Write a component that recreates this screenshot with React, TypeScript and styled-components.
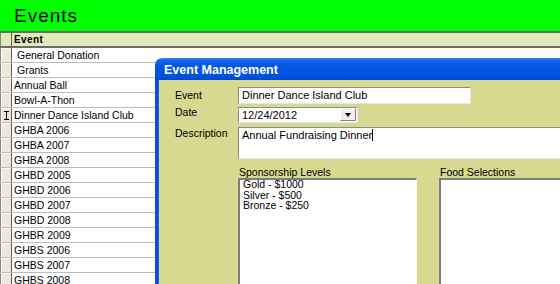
import React from 'react';
import styled, { createGlobalStyle } from 'styled-components';

const GlobalStyle = createGlobalStyle`
  html, body {
    margin: 0;
    padding: 0;
    background: #fff;
  }
  body {
    font-family: "Liberation Sans", Arial, sans-serif;
    color: #000;
  }
`;

const Screen = styled.div`
  position: relative;
  width: 560px;
  height: 284px;
  overflow: hidden;
  background: #fff;
`;

const Banner = styled.div`
  height: 31px;
  background: #00ff00;
  border-bottom: 2px solid #6b6b6b;
  padding-left: 14px;
  font-size: 19px;
  letter-spacing: 1px;
  line-height: 31px;
`;

const Grid = styled.div`
  display: flex;
  flex-direction: column;
`;

const Row = styled.div<{ $head?: boolean }>`
  display: grid;
  grid-template-columns: 12px 1fr;
  height: ${(p) => (p.$head ? 13 : 14)}px;
  flex-shrink: 0;
  border-bottom: ${(p) => (p.$head ? '2px solid #6b6b6b' : '1px solid #bcbcbc')};
  background: ${(p) => (p.$head ? '#e2eabc' : '#fff')};
`;

const Selector = styled.div<{ $head?: boolean }>`
  border-left: 1px solid #8a8a8a;
  border-right: 1px solid #5f5f5f;
  background: ${(p) => (p.$head ? 'transparent' : '#ece9d8')};
  box-shadow: ${(p) => (p.$head ? 'none' : 'inset 1px 1px 0 #fbfaf4')};
  display: flex;
  align-items: center;
  justify-content: center;
`;

const Cell = styled.div<{ $indent?: boolean }>`
  padding-left: ${(p) => (p.$indent ? 5 : 2)}px;
  font-size: 10.5px;
  line-height: 14px;
  white-space: nowrap;
`;

const HeadCell = styled.div`
  padding-left: 2px;
  font-size: 10px;
  font-weight: bold;
  letter-spacing: 0.4px;
  line-height: 13px;
`;

const Window = styled.div`
  position: absolute;
  left: 155px;
  top: 58px;
  width: 450px;
  height: 260px;
  display: flex;
  flex-direction: column;
`;

const WinTitle = styled.div`
  height: 22px;
  border-radius: 7px 7px 0 0;
  background: linear-gradient(
    to bottom,
    #3d8ef5 0%,
    #1266ee 10%,
    #0556e4 35%,
    #0053e2 80%,
    #0047cc 100%
  );
  color: #fff;
  font-size: 12.5px;
  font-weight: bold;
  padding-left: 9px;
  line-height: 25px;
  white-space: nowrap;
`;

const WinBody = styled.div`
  flex: 1;
  background: #d6d98f;
  border-left: 3px solid #0a4bdc;
  box-shadow: inset 1px 0 0 #1c5ee8;
  padding: 7px 0 0 17px;
`;

const Form = styled.div`
  display: grid;
  grid-template-columns: 63px 1fr;
  align-items: start;
`;

const Label = styled.div<{ $offset: number }>`
  font-size: 10.5px;
  line-height: 12px;
  margin-top: ${(p) => p.$offset}px;
  white-space: nowrap;
`;

const Field = styled.div<{ $w: number; $h: number; $gap: number }>`
  box-sizing: border-box;
  width: ${(p) => p.$w}px;
  height: ${(p) => p.$h}px;
  margin-top: ${(p) => p.$gap}px;
  background: #fff;
  border: 1px solid;
  border-color: #8c8c8c #e6e6e6 #e6e6e6 #8c8c8c;
  font-size: 11px;
  line-height: 14px;
  padding: 0 2px 0 3px;
  white-space: nowrap;
  overflow: hidden;
  display: flex;
  align-items: flex-start;
`;

const FieldText = styled.span`
  flex: 1;
`;

const DropButton = styled.div`
  width: 16px;
  height: 13px;
  margin: 0 -1px 0 0;
  box-sizing: border-box;
  background: #f1efe6;
  border: 1px solid;
  border-color: #fff #7f7f7f #7f7f7f #fff;
  display: flex;
  align-items: center;
  justify-content: center;
  &::after {
    content: '';
    border-left: 3.5px solid transparent;
    border-right: 3.5px solid transparent;
    border-top: 4px solid #000;
  }
`;

const Caret = styled.span`
  display: inline-block;
  width: 1px;
  height: 12px;
  background: #000;
  vertical-align: -2px;
`;

const Lists = styled.div`
  grid-column: 2;
  display: flex;
  gap: 22px;
  margin-top: 8px;
`;

const ListGroup = styled.div<{ $w: number }>`
  width: ${(p) => p.$w}px;
  display: flex;
  flex-direction: column;
`;

const Caption = styled.div`
  font-size: 10.5px;
  line-height: 11px;
  height: 11px;
  padding-left: 1px;
  white-space: nowrap;
`;

const ListBox = styled.div`
  height: 140px;
  background: #fff;
  border-top: 2px solid #7d7d7d;
  border-left: 2px solid #7d7d7d;
  border-right: 1px solid #f4f4f4;
  padding: 0 0 0 3px;
`;

const ListItems = styled.div`
  margin-top: -1px;
`;

const ListItem = styled.div`
  font-size: 10.5px;
  line-height: 10.5px;
  white-space: nowrap;
`;

const IBeam = () => (
  <svg width="7" height="9" viewBox="0 0 7 9">
    <path d="M1 0.5h5M3.5 0.5v8M1 8.5h5" stroke="#000" strokeWidth="1" fill="none" />
  </svg>
);

const events = [
  { name: 'General Donation', indent: true },
  { name: 'Grants', indent: true },
  { name: 'Annual Ball' },
  { name: 'Bowl-A-Thon' },
  { name: 'Dinner Dance Island Club', editing: true },
  { name: 'GHBA 2006' },
  { name: 'GHBA 2007' },
  { name: 'GHBA 2008' },
  { name: 'GHBD 2005' },
  { name: 'GHBD 2006' },
  { name: 'GHBD 2007' },
  { name: 'GHBD 2008' },
  { name: 'GHBR 2009' },
  { name: 'GHBS 2006' },
  { name: 'GHBS 2007' },
  { name: 'GHBS 2008' },
];

const levels = ['Gold - $1000', 'Silver - $500', 'Bronze - $250'];

export default function App() {
  return (
    <>
      <GlobalStyle />
      <Screen>
        <Banner>Events</Banner>
        <Grid>
          <Row $head>
            <Selector $head />
            <HeadCell>Event</HeadCell>
          </Row>
          {events.map((e) => (
            <Row key={e.name}>
              <Selector>{e.editing && <IBeam />}</Selector>
              <Cell $indent={e.indent}>{e.name}</Cell>
            </Row>
          ))}
        </Grid>

        <Window>
          <WinTitle>Event Management</WinTitle>
          <WinBody>
            <Form>
              <Label $offset={2}>Event</Label>
              <Field $w={233} $h={17} $gap={0}>
                <FieldText>Dinner Dance Island Club</FieldText>
              </Field>

              <Label $offset={2}>Date</Label>
              <Field $w={120} $h={16} $gap={3}>
                <FieldText>12/24/2012</FieldText>
                <DropButton />
              </Field>

              <Label $offset={4}>Description</Label>
              <Field $w={400} $h={32} $gap={4}>
                <FieldText>
                  Annual Fundraising Dinner
                  <Caret />
                </FieldText>
              </Field>

              <Lists>
                <ListGroup $w={179}>
                  <Caption>Sponsorship Levels</Caption>
                  <ListBox>
                    <ListItems>
                      {levels.map((l) => (
                        <ListItem key={l}>{l}</ListItem>
                      ))}
                    </ListItems>
                  </ListBox>
                </ListGroup>
                <ListGroup $w={200}>
                  <Caption>Food Selections</Caption>
                  <ListBox />
                </ListGroup>
              </Lists>
            </Form>
          </WinBody>
        </Window>
      </Screen>
    </>
  );
}
